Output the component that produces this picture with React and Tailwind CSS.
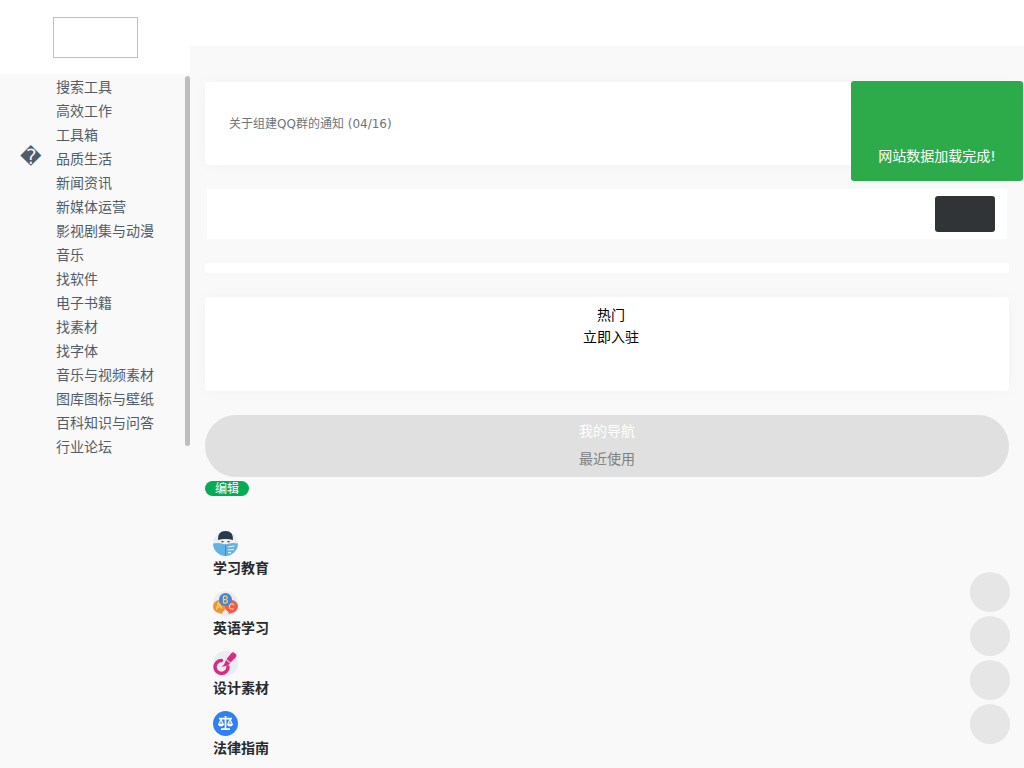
import { useState } from 'react';

const menu = [
  '搜索工具',
  '高效工作',
  '工具箱',
  '品质生活',
  '新闻资讯',
  '新媒体运营',
  '影视剧集与动漫',
  '音乐',
  '找软件',
  '电子书籍',
  '找素材',
  '找字体',
  '音乐与视频素材',
  '图库图标与壁纸',
  '百科知识与问答',
  '行业论坛',
];

const ReadingIcon = () => (
  <svg viewBox="0 0 50 50" className="size-[25px]" aria-hidden="true">
    <circle cx="25" cy="25" r="25" fill="#ebedef" />
    <path d="M13 15h24v8q-5 6-12 6t-12-6z" fill="#f6efe8" />
    <path d="M10 18Q9 0 25 0t15 18q-7-2-15-2t-15 2z" fill="#293a4e" />
    <path d="M17 21h4M29 21h4" stroke="#293a4e" strokeWidth="2.5" />
    <path d="M0 25q13-3 25 2 12-5 25-2a25 25 0 0 1-50 0z" fill="#62b3e4" />
    <path d="M25 27v23" stroke="#3d8dc4" strokeWidth="2" />
    <path d="M30 32l13-2M30 38l12-1M30 43h6" stroke="#e5f5ff" strokeWidth="2.5" />
  </svg>
);

const EnglishIcon = () => (
  <svg viewBox="0 0 50 50" className="size-[25px]" aria-hidden="true">
    <circle cx="25" cy="25" r="25" fill="#ebecee" />
    <path d="M25 28l-5 12h10z" fill="#f8f8f8" />
    <circle cx="13" cy="31" r="13" fill="#ee9434" />
    <path d="M12 44l8 2-3-5z" fill="#ee9434" />
    <circle cx="37" cy="31" r="13" fill="#ee5f4b" />
    <path d="M38 44l-8 2 3-5z" fill="#ee5f4b" />
    <circle cx="25" cy="17" r="13" fill="#4c83cf" />
    <path
      d="M21 10v14M21 10h5q5 3 0 7h-5m5 0q6 4 0 7h-5"
      fill="none"
      stroke="#ecd386"
      strokeWidth="2.5"
    />
    <path d="M7 37l4-13 7 11M8 33l7-2" fill="none" stroke="#f9d66c" strokeWidth="2.5" />
    <path d="M42 28q-6-5-9 1-2 8 8 7" fill="none" stroke="#ffca9e" strokeWidth="2.5" />
  </svg>
);

const DesignIcon = () => (
  <svg viewBox="0 0 50 50" className="size-[25px]" aria-hidden="true">
    <circle cx="25" cy="25" r="25" fill="#ebecee" />
    <path
      d="M17 19a13 13 0 1 0 13 13"
      fill="none"
      stroke="#d62b82"
      strokeWidth="7"
      strokeLinecap="round"
    />
    <path d="M16 31q6-1 10-13l8 7q-5 7-18 6z" fill="#d62b82" />
    <path d="M27 16L37 4q3-3 7 1 5 3 2 7L35 23z" fill="#d62b82" />
    <path d="M26 17l9 7" stroke="#f3a5cc" strokeWidth="1.5" />
  </svg>
);

const LawIcon = () => (
  <svg viewBox="0 0 50 50" className="size-[25px]" aria-hidden="true">
    <circle cx="25" cy="25" r="25" fill="#2f80f5" />
    <path d="M25 10v25M12 15h26M16 36h18" stroke="#fff" strokeWidth="3.5" fill="none" />
    <path d="M16 16l-5 11h10zM34 16l-5 11h10z" fill="#8fbcfa" stroke="#fff" strokeWidth="2" />
    <path d="M10 26h12q-1 5-6 5t-6-5zM28 26h12q-1 5-6 5t-6-5z" fill="#fff" />
  </svg>
);

const categories = [
  { name: '学习教育', Icon: ReadingIcon },
  { name: '英语学习', Icon: EnglishIcon },
  { name: '设计素材', Icon: DesignIcon },
  { name: '法律指南', Icon: LawIcon },
];

const tools = ['返回顶部', '搜索', '切换主题', '反馈'];

const Sidebar = () => (
  <aside className="w-[190px] shrink-0">
    <div className="flex h-[74px] justify-center bg-white pt-[17px]">
      <a
        href="#home"
        aria-label="首页"
        className="h-[41px] w-[85px] border border-[#c0c0c0]"
      ></a>
    </div>
    <div className="flex pt-px text-[#515c6b]">
      <span className="w-14 shrink-0 pt-[70px] pl-5 text-[21px] leading-6">
        &#xfffd;
      </span>
      <ul className="grow">
        {menu.map((item) => (
          <li key={item} className="leading-6">
            <a href={`#${item}`}>{item}</a>
          </li>
        ))}
      </ul>
      <div className="mt-px h-[370px] w-[5px] rounded-sm bg-[#bebebe]"></div>
    </div>
  </aside>
);

const App = () => {
  const [keyword, setKeyword] = useState('');

  return (
    <div className="flex h-screen overflow-hidden bg-[#f9f9f9] font-['DejaVu_Sans','Noto_Sans_CJK_SC',sans-serif] text-sm">
      <Sidebar />
      <div className="min-w-0 grow">
        <header className="h-[46px] bg-white"></header>
        <main className="px-[15px] pt-9">
          <section className="flex h-[83px] items-center rounded bg-white px-6 text-xs text-[#6c757d] shadow-[0_0_16px_rgba(0,0,0,0.03)]">
            <a href="#notice">关于组建QQ群的通知 (04/16)</a>
          </section>

          <form
            className="mx-0.5 mt-6 flex h-[50px] items-center bg-white pr-3"
            onSubmit={(e) => e.preventDefault()}
          >
            <input
              type="text"
              aria-label="搜索"
              value={keyword}
              onChange={(e) => setKeyword(e.target.value)}
              className="h-9 min-w-0 grow px-4 outline-none"
            />
            <button
              type="submit"
              aria-label="搜索"
              className="h-9 w-[60px] rounded-[3px] bg-[#303436]"
            ></button>
          </form>

          <div className="mt-6 h-2.5 rounded-xs bg-white"></div>

          <section className="mt-6 h-[94px] rounded bg-white pt-[7px] pl-2 text-center leading-[22px] text-black shadow-[0_0_16px_rgba(0,0,0,0.03)]">
            <h2>热门</h2>
            <a href="#join">立即入驻</a>
          </section>

          <div className="mt-6 flex flex-col items-center rounded-full bg-[#e0e0e0] pt-0.5 pb-1 leading-7">
            <button type="button" className="text-white">
              我的导航
            </button>
            <button type="button" className="text-[#808080]">
              最近使用
            </button>
          </div>
          <button
            type="button"
            className="mt-1 block h-[15px] rounded-full bg-[#07ab54] px-2.5 text-xs leading-4 text-white"
          >
            编辑
          </button>

          <ul className="mt-[35px] pl-2">
            {categories.map(({ name, Icon }) => (
              <li key={name} className="h-[60px]">
                <Icon />
                <h3 className="leading-6 font-bold text-[#282a2d]">{name}</h3>
              </li>
            ))}
          </ul>
        </main>
      </div>

      <div
        role="status"
        className="fixed top-[81px] right-px flex h-[100px] w-[172px] items-end justify-center rounded-[3px] bg-[#2dab4a] pb-[13px] leading-6 text-white"
      >
        网站数据加载完成!
      </div>

      <div className="fixed right-3.5 bottom-6 flex flex-col gap-1">
        {tools.map((tool) => (
          <button
            key={tool}
            type="button"
            aria-label={tool}
            className="size-10 rounded-full bg-[#e6e6e6]"
          ></button>
        ))}
      </div>
    </div>
  );
};

export default App;
